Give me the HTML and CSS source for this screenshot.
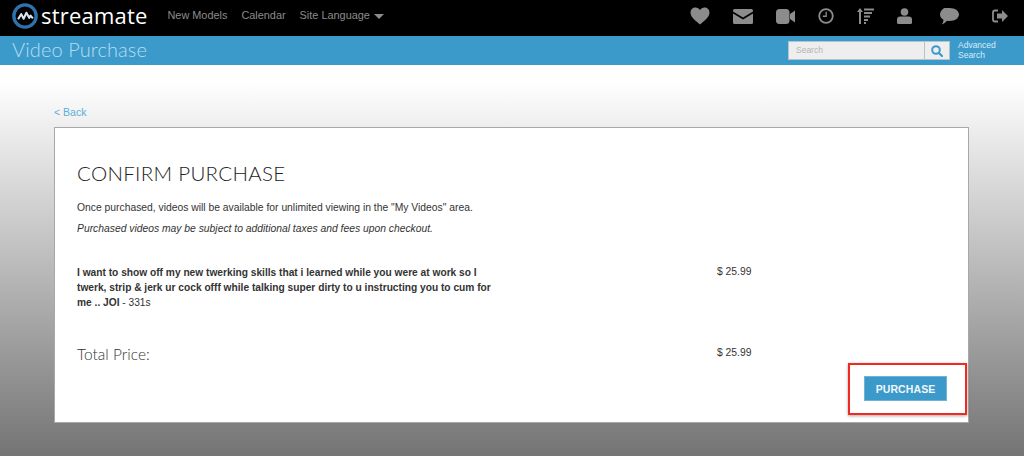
FILE: index.html
```html
<!DOCTYPE html>
<html lang="en">
<head>
<meta charset="utf-8">
<title>Video Purchase</title>
<link rel="stylesheet" href="styles.css">
</head>
<body>
<header class="topbar">
  <a class="logo">
    <svg class="logo-mark" viewBox="0 0 28 28" width="28" height="28" aria-hidden="true">
      <circle cx="14" cy="14" r="12" fill="none" stroke="#2e72ad" stroke-width="3.600"/>
      <path d="M6.500 17.500 L10 12 L12.500 17 L15.500 10.500 L18.500 16 L20 13.500 L22.500 16.500" fill="none" stroke="#d9e6f2" stroke-width="2.200" stroke-linejoin="round"/>
    </svg>
    <span class="logo-text">streamate</span>
  </a>
  <nav class="nav">
    <a>New Models</a>
    <a>Calendar</a>
    <a class="lang">Site Language <span class="caret"></span></a>
  </nav>
  <div class="icons">
    <svg width="20" height="18" viewBox="0 0 20 18"><path d="M10 17.5C6 14 .5 10.500 .5 5.500 .5 2.500 2.800 .5 5.500 .5 7.500 .5 9 1.500 10 3 11 1.500 12.500 .5 14.500 .5 17.200 .5 19.500 2.500 19.500 5.500 19.500 10.500 14 14 10 17.500Z"/></svg>
    <svg width="20" height="15" viewBox="0 0 20 15"><path d="M1.500 0H18.500Q20 0 20 1.500V2.500L10 8.500 0 2.500V1.500Q0 0 1.500 0Z"/><path d="M0 4.500L10 10.500 20 4.500V13.500Q20 15 18.500 15H1.500Q0 15 0 13.500Z"/></svg>
    <svg width="19" height="15" viewBox="0 0 19 15"><rect width="13.500" height="15" rx="3.500"/><path d="M14 5L19 1.500V13.500L14 10Z"/></svg>
    <svg width="16" height="16" viewBox="0 0 16 16"><circle cx="8" cy="8" r="6.800" fill="none" stroke="#8c8c8c" stroke-width="1.800"/><path d="M8.800 3.800V8.900H4.800V7.600H7.500V3.800Z"/></svg>
    <svg width="17" height="16" viewBox="0 0 17 16"><path d="M3 0L6 4H4V16H2V4H0Z"/><rect x="7" y="0.500" width="10" height="2"/><rect x="7" y="4" width="8" height="2"/><rect x="7" y="7.500" width="6" height="2"/><rect x="7" y="11" width="4" height="2"/><rect x="7" y="14" width="2" height="2"/></svg>
    <svg width="15" height="16" viewBox="0 0 15 16"><circle cx="7.500" cy="4" r="3.800"/><path d="M0 14.500V11.500Q0 8.500 3.500 8.500H11.500Q15 8.500 15 11.500V14.500Q15 16 13.500 16H1.500Q0 16 0 14.500Z"/></svg>
    <svg class="icon-chat" width="19" height="17" viewBox="0 0 19 17"><path d="M9.500 0C14.800 0 19 2.800 19 6.500S14.800 13 9.500 13Q8.300 13 7 12.800 5 15.500 1.800 16.500 3.500 14.500 3.500 11.800 0 9.800 0 6.500 0 2.800 4.200 0 9.500 0Z"/></svg>
    <svg class="icon-exit" width="16" height="14" viewBox="0 0 16 14"><path d="M6 1.500H3Q1 1.500 1 3.500V10.500Q1 12.500 3 12.500H6" fill="none" stroke="#8c8c8c" stroke-width="1.800"/><path d="M10 1L16 7 10 13V9.500H5V4.500H10Z"/></svg>
  </div>
</header>
<div class="subbar">
  <h1>Video Purchase</h1>
  <form class="search">
    <div class="search-box">
      <span class="search-input">Search</span>
      <span class="search-btn">
        <svg width="12" height="12" viewBox="0 0 12 12"><circle cx="5" cy="5" r="3.800" fill="none" stroke="#3c9acb" stroke-width="2"/><path d="M8 8L11 11" stroke="#3c9acb" stroke-width="2.200" stroke-linecap="round"/></svg>
      </span>
    </div>
    <a class="advanced">Advanced<br>Search</a>
  </form>
</div>
<main class="content">
  <a class="back">&lt; Back</a>
  <section class="card">
    <h2>CONFIRM PURCHASE</h2>
    <p class="note">Once purchased, videos will be available for unlimited viewing in the "My Videos" area.</p>
    <p class="note"><em>Purchased videos may be subject to additional taxes and fees upon checkout.</em></p>
    <div class="item">
      <div class="item-title"><strong>I want to show off my new twerking skills that i learned while you were at work so I twerk, strip &amp; jerk ur cock offf while talking super dirty to u instructing you to cum for me .. JOI</strong> - 331s</div>
      <div class="price">$ 25.99</div>
    </div>
    <div class="total">
      <div class="total-label">Total Price:</div>
      <div class="price">$ 25.99</div>
    </div>
    <div class="actions">
      <button class="purchase" type="button">PURCHASE</button>
    </div>
    <div class="highlight"></div>
  </section>
</main>
</body>
</html>
```
FILE: styles.css
```css
* { box-sizing: border-box; }
html, body { margin: 0; height: 456px; overflow: hidden; }
body { font-family: "Liberation Sans", Arial, sans-serif; color: #333; background: #fff; display: flex; flex-direction: column; }

.topbar { height: 36px; flex: none; background: #000; display: flex; align-items: center; padding: 0 16px 5px 12px; }
.logo { display: flex; align-items: center; gap: 3px; }
.logo-mark { display: block; width: 26px; height: 26px; }
.logo-text { font-family: "Open Sans", sans-serif; font-size: 22px; color: #fff; line-height: 26px; letter-spacing: .2px; position: relative; top: -1px; }
.nav { display: flex; gap: 14px; margin-left: 20px; padding-bottom: 2px; font-size: 10.9px; color: #8c8c8c; }
.caret { display: inline-block; width: 0; height: 0; margin-left: 1px; border-left: 5px solid transparent; border-right: 5px solid transparent; border-top: 5px solid #8c8c8c; vertical-align: 0; }
.icons { margin-left: auto; margin-top: 1px; display: flex; align-items: center; gap: 23px; }
.icons svg { fill: #8c8c8c; display: block; }
.icons .icon-chat { margin-left: 5px; }
.icons .icon-exit { margin-left: 10px; }

.subbar { height: 29px; flex: none; background: #3c9acb; display: flex; align-items: center; justify-content: space-between; padding-left: 12px; }
.subbar h1 { margin: 0 0 3px; font-family: Lato, sans-serif; font-weight: 300; font-size: 20px; letter-spacing: .1px; color: #b9dcef; }
.search { display: flex; align-items: center; gap: 8px; width: 236px; }
.search-box { display: flex; width: 162px; height: 19px; border: 1px solid #b4c4cc; background: #eee; }
.search-input { flex: 1; font-size: 8.5px; line-height: 17px; padding-left: 7px; color: #b5b5b5; }
.search-btn { width: 25px; border-left: 1px solid #b4c4cc; display: flex; align-items: center; justify-content: center; }
.advanced { font-size: 8.5px; line-height: 9.5px; color: #d5ebf6; }

.content { flex: 1; padding: 40px 55px 33px 54px; display: flex; flex-direction: column; background: linear-gradient(to bottom, #fff 0, #fff 4%, #747474 100%); }
.back { font-size: 10.5px; line-height: 14px; color: #5aaedb; margin-bottom: 8px; }
.card { position: relative; flex: 1; background: #fff; border: 1px solid #a8a8a8; padding: 33px 21px 0 22px; }
.card h2 { margin: 0 0 16px; font-family: Lato, sans-serif; font-weight: 300; font-size: 20.5px; line-height: 24px; color: #222; letter-spacing: .3px; }
.note { margin: 0 0 7px; font-size: 10.33px; line-height: 14px; }
.item { display: flex; margin-top: 29px; font-size: 10.2px; line-height: 15px; }
.item-title { width: 425px; color: #333; }
.price { margin-left: 215px; font-size: 10.33px; line-height: 14px; }
.total { display: flex; margin-top: 36px; align-items: flex-start; }
.total-label { width: 425px; font-family: Lato, sans-serif; font-weight: 300; font-size: 15.5px; line-height: 16px; color: #333; }
.actions { display: flex; justify-content: flex-end; margin-top: 14px; }
.purchase { width: 83px; height: 25px; border: 1px solid #6fb3d6; padding: 0; background: #3c9acb; color: #f0f7fb; font-family: "Liberation Sans", Arial, sans-serif; font-weight: 700; font-size: 10.5px; letter-spacing: .1px; }
.highlight { position: absolute; left: 793px; top: 235px; width: 119px; height: 52px; border: 2px solid #f02a20; box-shadow: 0 1px 3px rgba(0,0,0,.35); pointer-events: none; }
```
